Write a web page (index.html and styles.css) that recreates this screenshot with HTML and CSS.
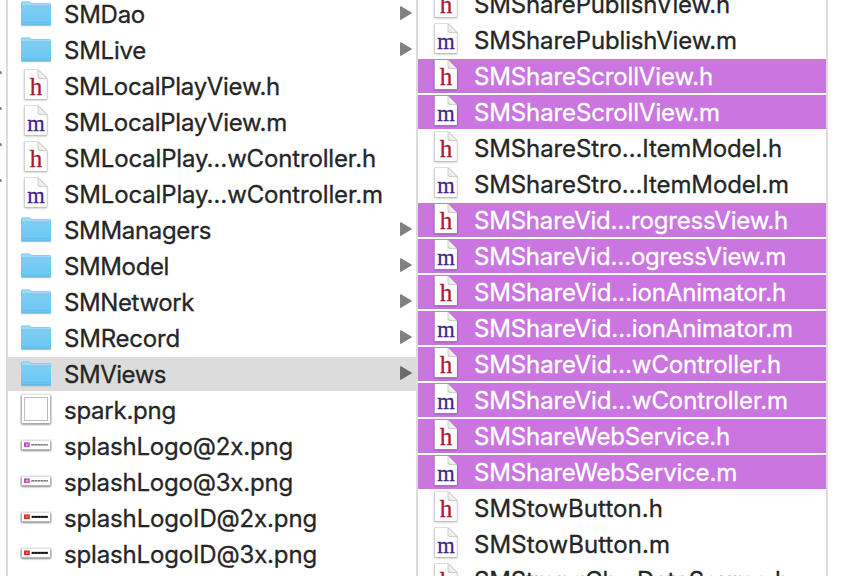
FILE: index.html
```
<!DOCTYPE html>
<html lang="en">
<head>
<meta charset="utf-8">
<title>Files</title>
<link rel="stylesheet" href="styles.css">
</head>
<body>
<svg class="defs" aria-hidden="true">
  <defs>
    <linearGradient id="blue" x1="0" y1="0" x2="0" y2="1"><stop offset="0" stop-color="#7ecff6"/><stop offset="1" stop-color="#69c6f3"/></linearGradient>
    <linearGradient id="fold" x1="0" y1="1" x2="1" y2="0"><stop offset="0" stop-color="#dedede"/><stop offset=".55" stop-color="#fafafa"/><stop offset="1" stop-color="#fff"/></linearGradient>
    <linearGradient id="logo" x1="0" y1="0" x2="1" y2="1"><stop offset="0" stop-color="#8a4fd8"/><stop offset="1" stop-color="#f0689c"/></linearGradient>
    <filter id="soft" x="-20%" y="-30%" width="140%" height="180%"><feGaussianBlur stdDeviation=".9"/></filter>
  </defs>
  <symbol id="folder" viewBox="0 0 32 34">
    <path d="M1 28.800h30" stroke="#000" stroke-opacity=".2"/>
    <path d="M1 6q0-1.600 1.500-1.600h6.500q1 0 1.600.7l.8.900h18q1.600 0 1.600 1.500V12H1z" fill="#9bdaf8"/>
    <path d="M1.400 12V6q0-1.200 1.100-1.200h6.500q.8 0 1.300.6l.9 1h18.200q1.200 0 1.200 1.100V12" fill="none" stroke="#7cc4e8" stroke-width=".6"/>
    <path d="M1 9.300h30V27q0 1.200-1.200 1.200H2.200Q1 28.200 1 27z" fill="url(#blue)"/>
    <path d="M1 9h30" stroke="#66b8e1" stroke-width=".7"/>
    <path d="M1 25.500h30" stroke="#5fb8e5" stroke-width=".5"/>
    <path d="M1.500 27.900h29" stroke="#56a9d6" stroke-width=".7"/>
  </symbol>
  <symbol id="page" viewBox="0 0 32 34">
    <path d="M4.500 1.400H18l9 9v20.600H4.500z" fill="#000" fill-opacity=".35" filter="url(#soft)"/>
    <path d="M4.500.7H18l9 9v20.600H4.500z" fill="#fff" stroke="#000" stroke-opacity=".14" stroke-width=".7"/>
    <path d="M18 .7v7q0 2 2 2h7z" fill="url(#fold)" stroke="#c2c2c2" stroke-width=".8"/>
  </symbol>
  <symbol id="picture" viewBox="0 0 32 34">
    <rect x="1.300" y="2.300" width="29.400" height="29" fill="#000" opacity=".65" filter="url(#soft)"/>
    <rect x="1.700" y="1.700" width="28.600" height="28.600" fill="#fff"/>
    <rect x="4.600" y="4.600" width="22.900" height="22.900" fill="#fff" stroke="#bdbdbd" stroke-width="1"/>
  </symbol>
  <symbol id="banner" viewBox="0 0 32 34">
    <rect x="1.300" y="12" width="29.400" height="9.400" fill="#000" opacity=".75" filter="url(#soft)"/>
    <rect x="1.700" y="11.500" width="28.600" height="9" fill="#fff"/>
  </symbol>
  <symbol id="logo-pink" viewBox="0 0 32 34">
    <use href="#banner"/><rect x="4" y="13.400" width="5.800" height="4.700" fill="url(#logo)"/><rect x="6" y="14.900" width="2" height="1.600" fill="#e9b2ed"/>
    <path d="M11 15.900h17" stroke="#a8a8a8" stroke-width="1.700"/><path d="M12 15.600h16" stroke="#777" stroke-width="1" stroke-dasharray="2 1"/>
  </symbol>
  <symbol id="logo-red" viewBox="0 0 32 34">
    <use href="#banner"/><rect x="4" y="13.400" width="5.800" height="4.700" fill="#d9322e"/><rect x="6" y="14.900" width="2" height="1.600" fill="#f07a68"/>
    <path d="M11.500 15.900h16.500" stroke="#555" stroke-width="2.200"/><path d="M12 15.900h16" stroke="#111" stroke-width="1.600" stroke-dasharray="2.500 .6"/>
  </symbol>
  <symbol id="arrow" viewBox="0 0 12 34">
    <path d="M.7 9.900L11.200 16L.7 22.200z" fill="currentColor" stroke="currentColor" stroke-width="1.300" stroke-linejoin="round"/>
  </symbol>
</svg>
<main class="browser">
  <section class="column sidebar"><i class="dot"></i><i class="dot"></i><i class="dot"></i><i class="dot"></i></section>
  <section class="column parent" id="parent"></section>
  <section class="column child" id="child"></section>
</main>
<script src="files.js"></script>
</body>
</html>
```
FILE: styles.css
```
* { box-sizing: border-box; }
body { margin: 0; background: #fff; overflow: hidden; }
.defs { position: absolute; width: 0; height: 0; }
.browser { display: flex; width: 846px; height: 576px; overflow: hidden; }
.column { flex: none; border-right: 2px solid #dcdcdc; overflow: hidden; display: flex; flex-direction: column; gap: 2px; }
.sidebar { width: 8px; padding-top: 71px; gap: 33px; }
.dot { flex: none; width: 2px; height: 3px; background: #858585; border-radius: 0 2px 2px 0; }
.parent, .child { width: 410px; }
.parent .row:first-child { margin-top: -3px; }
.child .row:first-child { margin-top: -13px; }
.row { flex: none; display: flex; align-items: center; height: 34px; padding: 0 4px 0 12px; color: #262626; }
.row.current { background: #dcdcdc; }
.row.selected { background: #cb76e0; color: #fff; }
.icon { flex: none; width: 32px; height: 34px; margin-right: 12px; }
.name { flex: 1; padding-top: 2px; font: 400 24px/34px Inter, "Liberation Sans", sans-serif; white-space: nowrap; }
.label { display: inline-block; -webkit-text-stroke: .3px currentColor; }
.arrow { flex: none; width: 12px; height: 34px; color: #808080; }
.current .arrow { color: #6b6b6b; }
.letter { font-family: "Liberation Serif", serif; stroke-width: .3px; }
.letter-h { font-size: 25px; fill: #ac1732; stroke: #ac1732; }
.letter-m { font-size: 24px; fill: #46218b; stroke: #46218b; }
```
FILE: files.js
```
// Each entry: icon, name, label width in pixels, row state
const parentFiles = [
  ["folder", "SMDao", 81], ["folder", "SMLive", 82],
  ["h", "SMLocalPlayView.h", 216], ["m", "SMLocalPlayView.m", 223],
  ["h", "SMLocalPlay…wController.h", 312], ["m", "SMLocalPlay…wController.m", 319],
  ["folder", "SMManagers", 147], ["folder", "SMModel", 105],
  ["folder", "SMNetwork", 130], ["folder", "SMRecord", 116],
  ["folder", "SMViews", 102, "current"], ["picture", "spark.png", 112],
  ["logo-pink", "splashLogo@2x.png", 229], ["logo-pink", "splashLogo@3x.png", 229],
  ["logo-red", "splashLogoID@2x.png", 253], ["logo-red", "splashLogoID@3x.png", 253]
];
const childFiles = [
  ["h", "SMSharePublishView.h", 256], ["m", "SMSharePublishView.m", 263],
  ["h", "SMShareScrollView.h", 239, "selected"], ["m", "SMShareScrollView.m", 246, "selected"],
  ["h", "SMShareStro…ItemModel.h", 308], ["m", "SMShareStro…ItemModel.m", 315],
  ["h", "SMShareVid…rogressView.h", 314, "selected"], ["m", "SMShareVid…ogressView.m", 312, "selected"],
  ["h", "SMShareVid…ionAnimator.h", 312, "selected"], ["m", "SMShareVid…ionAnimator.m", 319, "selected"],
  ["h", "SMShareVid…wController.h", 307, "selected"], ["m", "SMShareVid…wController.m", 314, "selected"],
  ["h", "SMShareWebService.h", 256, "selected"], ["m", "SMShareWebService.m", 263, "selected"],
  ["h", "SMStowButton.h", 189], ["m", "SMStowButton.m", 196],
  ["h", "SMStrongCh…DataSource.h", 315]
];
const letters = {
  h: '<text class="letter letter-h" x="9.800" y="26" textLength="12">h</text>',
  m: '<text class="letter letter-m" x="7.200" y="26" textLength="17.500" lengthAdjust="spacingAndGlyphs">m</text>'
};

function icon(kind) {
  const shape = letters[kind] ? "page" : kind;
  return `<svg class="icon" viewBox="0 0 32 34"><use href="#${shape}"/>${letters[kind] || ""}</svg>`;
}

function fill(column, files) {
  column.innerHTML = files.map(([kind, name, , state]) =>
    `<div class="row ${state || ""}">${icon(kind)}<span class="name"><span class="label">${name}</span></span>${kind === "folder" ? '<svg class="arrow"><use href="#arrow"/></svg>' : ""}</div>`
  ).join("");
  column.querySelectorAll(".label").forEach((label, i) => {
    const extra = files[i][2] - label.getBoundingClientRect().width;
    label.style.letterSpacing = `${extra / files[i][1].length}px`;
  });
}
fill(document.getElementById("parent"), parentFiles);
fill(document.getElementById("child"), childFiles);
```
